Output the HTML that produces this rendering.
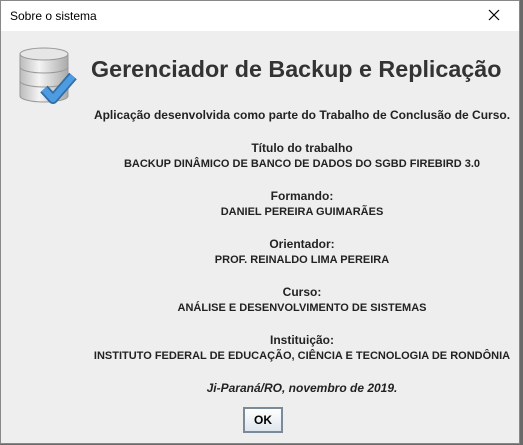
<!DOCTYPE html>
<html><head><style>
body{margin:0;width:523px;height:445px;background:#6a6a6a;position:relative;overflow:hidden;font-family:"Liberation Sans",sans-serif}
.win{position:absolute;left:0;top:0;width:518px;height:442px;border:1px solid #888;background:#eeeeee}
.tb{position:absolute;left:0;top:0;width:518px;height:30px;background:#fff;font-size:12px;color:#000}
.tb span{position:absolute;left:9px;top:8px}
.x{position:absolute;left:486px;top:7px}
.title{position:absolute;left:90px;top:55px;font-size:23.3px;font-weight:bold;color:#333}
.l{position:absolute;left:1px;width:600px;text-align:center;font-size:12px;font-weight:bold;color:#222}
.u{font-size:11px}
.ok{position:absolute;left:242px;top:406px;width:36px;height:22px;border:2px solid #7a8a99;background:linear-gradient(#fff,#dfe6ef);font-size:12px;font-weight:bold;text-align:center;line-height:22px}
</style></head><body>
<div class="win">
<div class="tb"><span>Sobre o sistema</span>
<svg class="x" width="14" height="14"><path d="M2 2L12 12M12 2L2 12" stroke="#000" stroke-width="1.2"/></svg></div>
<svg style="position:absolute;left:17px;top:44px" width="62" height="62">
<defs><linearGradient id="g" x1="0" x2="1"><stop offset="0" stop-color="#bbb"/><stop offset=".4" stop-color="#f4f4f4"/><stop offset="1" stop-color="#aaa"/></linearGradient></defs>
<path d="M2 9v42a24 6 0 0 0 48 0V9" fill="url(#g)" stroke="#999"/>
<ellipse cx="26" cy="9" rx="24" ry="6" fill="#e6e6e6" stroke="#999"/>
<path d="M2 22a24 6 0 0 0 48 0M2 36a24 6 0 0 0 48 0" fill="none" stroke="#999"/>
<path d="M26 44l9 10 20-23" fill="none" stroke="#2f6ea6" stroke-width="10" stroke-linejoin="round"/>
<path d="M26 44l9 10 20-23" fill="none" stroke="#4d9be0" stroke-width="6.5" stroke-linejoin="round"/>
</svg>
<div class="title">Gerenciador de Backup e Replicação</div>
<div class="l" style="top:107px">Aplicação desenvolvida como parte do Trabalho de Conclusão de Curso.</div>
<div class="l" style="top:140px">Título do trabalho</div>
<div class="l u" style="top:157px">BACKUP DINÂMICO DE BANCO DE DADOS DO SGBD FIREBIRD 3.0</div>
<div class="l" style="top:188px">Formando:</div>
<div class="l u" style="top:205px">DANIEL PEREIRA GUIMARÃES</div>
<div class="l" style="top:236px">Orientador:</div>
<div class="l u" style="top:253px">PROF. REINALDO LIMA PEREIRA</div>
<div class="l" style="top:284px">Curso:</div>
<div class="l u" style="top:301px">ANÁLISE E DESENVOLVIMENTO DE SISTEMAS</div>
<div class="l" style="top:332px">Instituição:</div>
<div class="l u" style="top:349px">INSTITUTO FEDERAL DE EDUCAÇÃO, CIÊNCIA E TECNOLOGIA DE RONDÔNIA</div>
<div class="l" style="top:380px;font-style:italic">Ji-Paraná/RO, novembro de 2019.</div>
<div class="ok">OK</div>
</div>
</body></html>
